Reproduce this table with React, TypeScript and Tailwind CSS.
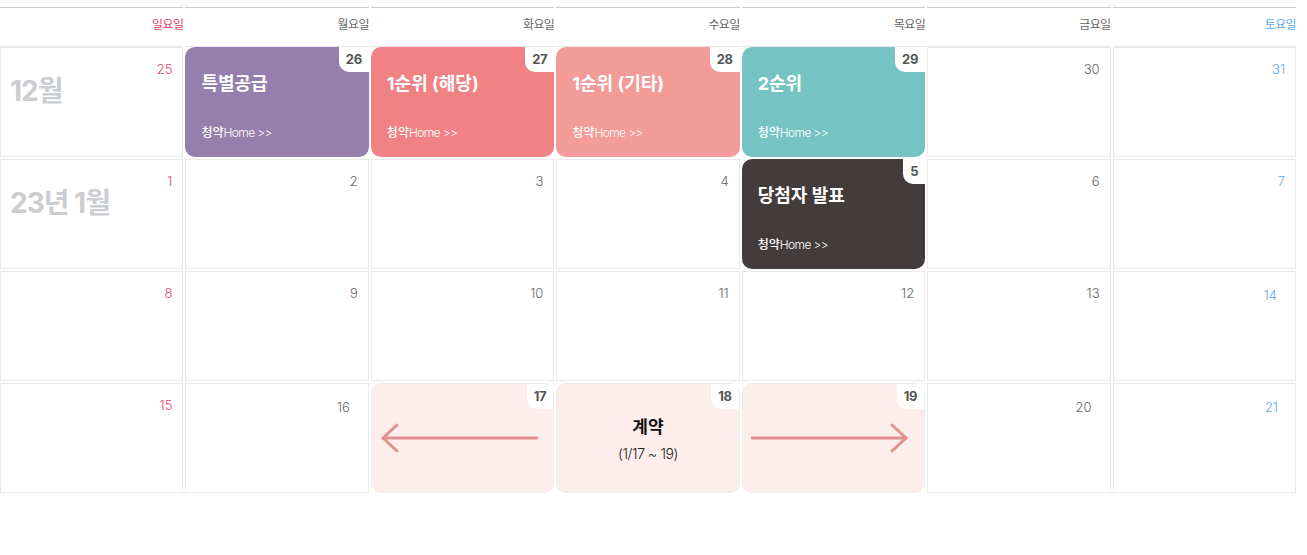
import React from "react";

type Cell = {
  d: number;
  tone?: "sun" | "sat" | "wk";
  month?: string;
  event?: { title: string; bg: string };
  pink?: "left" | "right" | "contract";
  numCls?: string;
};

const KR = "font-['Inter','Noto_Sans_CJK_KR',sans-serif]";

const rows: Cell[][] = [
  [
    { d: 25, tone: "sun", month: "12월" },
    { d: 26, event: { title: "특별공급", bg: "bg-[#967fad]" } },
    { d: 27, event: { title: "1순위 (해당)", bg: "bg-[#f08286]" } },
    { d: 28, event: { title: "1순위 (기타)", bg: "bg-[#f39b98]" } },
    { d: 29, event: { title: "2순위", bg: "bg-[#75c4c3]" } },
    { d: 30 },
    { d: 31, tone: "sat" },
  ],
  [
    { d: 1, tone: "sun", month: "23년 1월" },
    { d: 2 },
    { d: 3 },
    { d: 4 },
    { d: 5, event: { title: "당첨자 발표", bg: "bg-[#433c3c]" } },
    { d: 6 },
    { d: 7, tone: "sat" },
  ],
  [
    { d: 8, tone: "sun" },
    { d: 9 },
    { d: 10 },
    { d: 11 },
    { d: 12 },
    { d: 13 },
    { d: 14, tone: "sat", numCls: "pr-[18px] pt-[15px]" },
  ],
  [
    { d: 15, tone: "sun" },
    { d: 16, numCls: "pr-[18px] pt-[15px]" },
    { d: 17, pink: "left" },
    { d: 18, pink: "contract" },
    { d: 19, pink: "right" },
    { d: 20, numCls: "pr-[18px] pt-[15px]" },
    { d: 21, tone: "sat", numCls: "pr-[17px] pt-[15px]" },
  ],
];

const headers = [
  { t: "일요일", c: "text-[#e34560]" },
  { t: "월요일", c: "text-[#666666]" },
  { t: "화요일", c: "text-[#666666]" },
  { t: "수요일", c: "text-[#666666]" },
  { t: "목요일", c: "text-[#666666]" },
  { t: "금요일", c: "text-[#666666]" },
  { t: "토요일", c: "text-[#5aaae8]" },
];

function Tab({ d }: { d: number }) {
  return (
    <div className="absolute right-0 top-0 flex h-[25px] items-center rounded-bl-[10px] bg-white px-[7px] text-[13px] font-bold leading-none text-[#555555] tracking-[-0.3px]">
      {d}
    </div>
  );
}

function Arrow({ dir }: { dir: "left" | "right" }) {
  return (
    <svg width="158" height="32" viewBox="0 0 158 32" fill="none">
      {dir === "left" ? (
        <g stroke="#e0908e" strokeWidth="3" strokeLinecap="round" strokeLinejoin="round">
          <line x1="2" y1="16" x2="156" y2="16" />
          <polyline points="16,3 2,16 16,29" />
        </g>
      ) : (
        <g stroke="#e0908e" strokeWidth="3" strokeLinecap="round" strokeLinejoin="round">
          <line x1="1" y1="16" x2="155" y2="16" />
          <polyline points="141,3 155,16 141,29" />
        </g>
      )}
    </svg>
  );
}

function DayCell({ c }: { c: Cell }) {
  if (c.event) {
    return (
      <div className={`relative flex h-[110px] flex-col justify-between rounded-[10px] ${c.event.bg} px-[16px] pb-[16px] pt-[25px] text-white`}>
        <Tab d={c.d} />
        <div className="text-[18px] font-bold leading-[24px]">{c.event.title}</div>
        <div className="text-[12px] leading-[16px]">
          <span className="font-medium">청약</span>
          <span className="font-light tracking-[-0.6px]">Home &gt;&gt;</span>
        </div>
      </div>
    );
  }
  if (c.pink) {
    return (
      <div className="relative h-[110px] rounded-[10px] border border-[#ececec] bg-[#fdeeeb]">
        <Tab d={c.d} />
        {c.pink === "left" && (
          <div className="flex h-full items-center pl-[9px]">
            <Arrow dir="left" />
          </div>
        )}
        {c.pink === "right" && (
          <div className="flex h-full items-center pl-[8px]">
            <Arrow dir="right" />
          </div>
        )}
        {c.pink === "contract" && (
          <div className="flex h-full flex-col items-center pt-[31px]">
            <div className="text-[17px] font-bold leading-[24px] text-[#111111]">계약</div>
            <div className="mt-[5px] text-[14px] font-light leading-[20px] tracking-[-0.4px] text-[#222222]">(1/17 ~ 19)</div>
          </div>
        )}
      </div>
    );
  }
  const col =
    c.tone === "sun" ? "text-[#e34560]" : c.tone === "sat" ? "text-[#5aaae8]" : "text-[#666666]";
  return (
    <div className="h-[110px] border border-[#e9e9e9] bg-white">
      <div className={`text-right text-[13px] font-light leading-[16px] ${col} ${c.numCls ?? "pr-[10px] pt-[13px]"}`}>
        {c.d}
      </div>
      {c.month && (
        <div className="-mt-[2px] pl-[9px] text-[28px] font-bold leading-[32px] tracking-[-1px] text-[#cbcdd0]">
          {c.month}
        </div>
      )}
    </div>
  );
}

export default function App() {
  return (
    <div className={`h-[555px] w-[1307px] bg-white ${KR}`}>
      <div className="w-[1296px] pt-[7px]">
        <div className="grid grid-cols-7 gap-x-[2px]">
          {headers.map((h) => (
            <div
              key={h.t}
              className={`h-[40px] border-b border-t border-b-[#e6e6e6] border-t-[#cccccc] pt-[8px] text-right text-[12px] leading-[18px] tracking-[-0.6px] ${h.c}`}
            >
              {h.t}
            </div>
          ))}
        </div>
        <div className="grid grid-cols-7 gap-[2px]">
          {rows.flat().map((c, i) => (
            <DayCell key={i} c={c} />
          ))}
        </div>
      </div>
    </div>
  );
}
